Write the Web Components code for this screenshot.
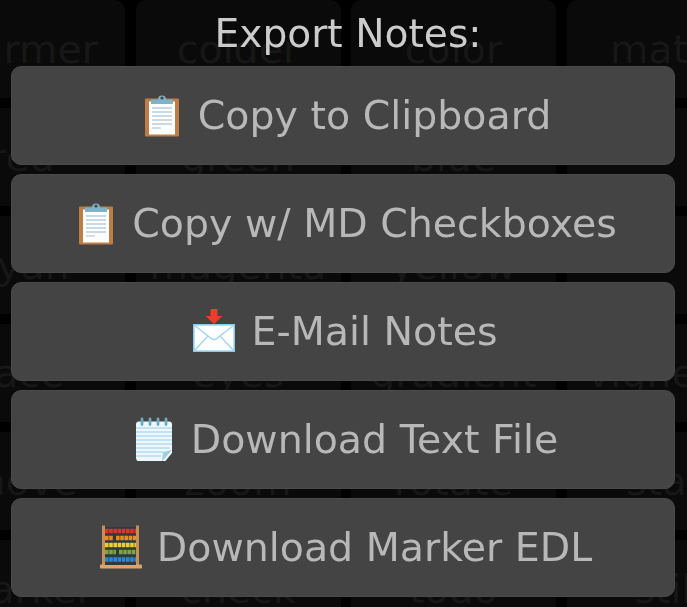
<!DOCTYPE html>
<html><head><meta charset="utf-8"><style>
html,body{margin:0;height:100%;background:#000;overflow:hidden}
body{font-family:"DejaVu Sans",sans-serif}
</style></head><body>
<bg-grid></bg-grid>
<export-panel>
<panel-button label="Copy to Clipboard"><svg slot="icon" width="46" height="44" viewBox="0 0 46 44"><rect x="8" y="5.500" width="34" height="38" fill="#bd7d45" rx="1"/><rect x="12" y="8.500" width="26" height="33" fill="#fbfdfe"/><path d="M15 15h20M15 19h20M15 23h20M15 27h20M15 31h20" stroke="#bfcdd9" stroke-width="1.500"/><path d="M15 35h9" stroke="#c4d2dc" stroke-width="1.500"/><path d="M14 11V6.500h7a4 4 0 0 1 8 0h7V11z" fill="#7fb3c9"/><circle cx="25" cy="5" r="1.600" fill="#444"/></svg></panel-button>
<panel-button label="Copy w/ MD Checkboxes"><svg slot="icon" width="46" height="44" viewBox="0 0 46 44"><rect x="8" y="5.500" width="34" height="38" fill="#bd7d45" rx="1"/><rect x="12" y="8.500" width="26" height="33" fill="#fbfdfe"/><path d="M15 15h20M15 19h20M15 23h20M15 27h20M15 31h20" stroke="#bfcdd9" stroke-width="1.500"/><path d="M15 35h9" stroke="#c4d2dc" stroke-width="1.500"/><path d="M14 11V6.500h7a4 4 0 0 1 8 0h7V11z" fill="#7fb3c9"/><circle cx="25" cy="5" r="1.600" fill="#444"/></svg></panel-button>
<panel-button label="E-Mail Notes"><svg slot="icon" width="46" height="46" viewBox="0 0 46 46"><rect x="3.800" y="16.800" width="40.400" height="26.400" fill="#fff" stroke="#8cc8ec" stroke-width="1.600"/><path d="M4 17l18 14q2 1 4 0l18-14M4 43l14-15M44 43L30 28" fill="none" stroke="#a6d6f2" stroke-width="1.500"/><path d="M20.500 1h7v7h5l-8.500 8-8.500-8h5z" fill="#ef3a2c"/></svg></panel-button>
<panel-button label="Download Text File"><svg slot="icon" width="46" height="44" viewBox="0 0 46 44"><path d="M9 4.500h30a3 3 0 0 1 3 3V36l-7 8.500H10a4 4 0 0 1-4-4V7.500a3 3 0 0 1 3-3z" fill="#eef8fc"/><path d="M6 11h36M6 15h36M6 19h36M6 23h36M6 27h36M6 31h34M6 35h27M6 39h25" stroke="#b3dcee" stroke-width="1.600"/><path d="M42 33l-9 2-1 9.500z" fill="#9dcfdf"/><path d="M12 7.500V2M20 7.500V2M28 7.500V2M36 7.500V2" stroke="#6fa9bf" stroke-width="2.800" stroke-linecap="round"/></svg></panel-button>
<panel-button label="Download Marker EDL"><svg slot="icon" width="46" height="44" viewBox="0 0 46 44"><rect x="6" y="0.500" width="3" height="40" fill="#c98f52"/><rect x="40" y="0.500" width="3" height="40" fill="#c98f52"/><rect x="4" y="39.500" width="42" height="4" rx="1" fill="#dfa468"/><rect x="9" y="2" width="31" height="38" fill="#30393d"/><g stroke-width="4.300" stroke-dasharray="3.600 .6"><path d="M9 6h31" stroke="#e0322c"/><path d="M9 13h8M20 13h20" stroke="#ef8a14"/><path d="M9 20h31" stroke="#f0cd30"/><path d="M9 27h11M23 27h17" stroke="#7aa83a"/><path d="M9 34.500h31" stroke="#2a86d8"/></g></svg></panel-button>
</export-panel>
<script>
const rows=[["warmer","colder","color","matte"],["red","green","blue",""],["cyan","magenta","yellow",""],["face","eyes","gradient","vignette"],["move","zoom","rotate","stab"],["marker","check","todo","still"]];
class BgGridEl extends HTMLElement{
 constructor(){super();const r=this.attachShadow({mode:'open'});
 r.innerHTML=`<style>:host{position:absolute;left:0;top:0;width:687px;height:607px;overflow:hidden;font:39.5px "DejaVu Sans",sans-serif;color:#171717;filter:blur(.7px)}
 section{margin-left:-80px;display:grid;grid-template-columns:repeat(4,205px);grid-auto-rows:98px;gap:10px 10.500px;width:850px}
 div{background:#0a0a0a;border-radius:10px;display:flex;align-items:center;justify-content:center;white-space:nowrap;overflow:hidden}</style><section>`+rows.flat().map(t=>`<div>${t}</div>`).join('')+`</section>`;}
}
class ExportPanel extends HTMLElement{
 constructor(){super();const r=this.attachShadow({mode:'open'});
 r.innerHTML=`<style>:host{position:relative;display:flex;flex-direction:column;gap:9.500px;padding:0 12px 0 11px;height:607px;box-sizing:border-box;filter:blur(.6px)}
 h2{margin:0;padding-left:10px;height:56.500px;font:39.2px/68px "DejaVu Sans",sans-serif;font-weight:400;color:#ccc;text-align:center;flex:none}</style><h2>Export Notes:</h2><slot></slot>`;}
}
class PanelButton extends HTMLElement{
 constructor(){super();const r=this.attachShadow({mode:'open'});
 r.innerHTML=`<style>:host{display:flex;align-items:center;justify-content:center;gap:15px;padding-left:2px;box-sizing:border-box;height:98.500px;flex:none;background:#444;border:1px solid #4a4a4a;border-radius:10px;font:39.5px "DejaVu Sans",sans-serif;color:#b8b8b8;white-space:nowrap}
 span{display:block}</style><slot name="icon"></slot><span>${this.getAttribute('label')}</span>`;}
}
customElements.define('bg-grid',BgGridEl);
customElements.define('export-panel',ExportPanel);
customElements.define('panel-button',PanelButton);
</script>
</body></html>
